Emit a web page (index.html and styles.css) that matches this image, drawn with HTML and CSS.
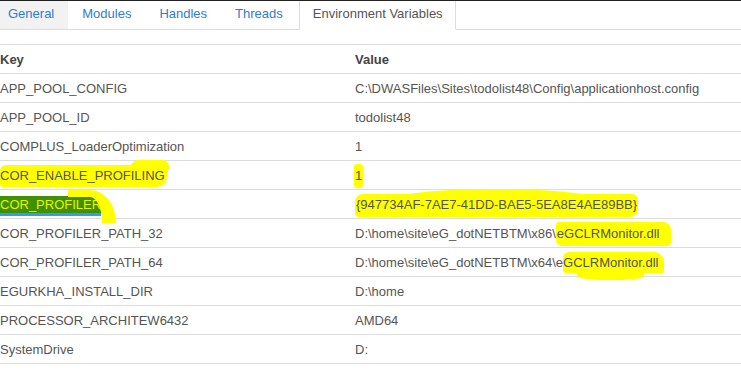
FILE: index.html
```html
<!DOCTYPE html>
<html lang="en">
<head>
    <meta charset="UTF-8">
    <meta name="viewport" content="width=device-width, initial-scale=1.0">
    <title>Process Explorer - Environment Variables</title>
    <link rel="stylesheet" href="styles.css">
</head>
<body>
    <div class="topbar"></div>
    <ul class="tabs">
        <li class="tab first"><a href="#">General</a></li>
        <li class="tab"><a href="#">Modules</a></li>
        <li class="tab"><a href="#">Handles</a></li>
        <li class="tab"><a href="#">Threads</a></li>
        <li class="tab active"><a href="#">Environment Variables</a></li>
    </ul>
    <table class="env">
        <thead>
            <tr><th class="key">Key</th><th>Value</th></tr>
        </thead>
        <tbody>
            <tr><td class="key">APP_POOL_CONFIG</td><td>C:\DWASFiles\Sites\todolist48\Config\applicationhost.config</td></tr>
            <tr><td class="key">APP_POOL_ID</td><td>todolist48</td></tr>
            <tr><td class="key">COMPLUS_LoaderOptimization</td><td>1</td></tr>
            <tr><td class="key"><span class="hl hl-wide">COR_ENABLE_PROFILING</span></td><td><span class="hl hl-one">1</span></td></tr>
            <tr><td class="key"><span class="sel">COR_PROFILER</span></td><td><span class="hl hl-guid">{947734AF-7AE7-41DD-BAE5-5EA8E4AE89BB}</span></td></tr>
            <tr><td class="key">COR_PROFILER_PATH_32</td><td>D:\home\site\eG_dotNETBTM\x86\<span class="hl hl-dll">eGCLRMonitor.dll</span></td></tr>
            <tr><td class="key">COR_PROFILER_PATH_64</td><td>D:\home\site\eG_dotNETBTM\x64\e<span class="hl hl-dll2">GCLRMonitor.dll</span></td></tr>
            <tr><td class="key">EGURKHA_INSTALL_DIR</td><td>D:\home</td></tr>
            <tr><td class="key">PROCESSOR_ARCHITEW6432</td><td>AMD64</td></tr>
            <tr><td class="key">SystemDrive</td><td>D:</td></tr>
        </tbody>
    </table>
</body>
</html>
```

FILE: styles.css
```css
body {
    margin: 0;
    font-family: "Liberation Sans", Arial, sans-serif;
    color: #555;
    background-color: #fff;
}
.topbar {
    height: 1px;
    background-color: #222;
}
.tabs {
    display: flex;
    margin: 0;
    padding: 0;
    list-style: none;
    height: 28px;
    border-bottom: 1px solid #ddd;
}
.tab {
    padding: 0 14px 3px 14px;
    line-height: 25px;
    font-size: 13px;
}
.tab a {
    color: #2f7cd3;
    text-decoration: none;
}
.tab.first {
    padding-left: 8px;
    background-color: #f2f2f2;
}
.tab.active {
    padding: 0 12px 0 13px;
    margin-left: 2px;
    border: 1px solid #ddd;
    border-top: none;
    border-bottom-color: #fff;
    background-color: #fff;
    height: 28px;
}
.tab.active a {
    color: #555;
}
.env {
    width: 100%;
    margin-top: 14px;
    border-collapse: collapse;
    font-size: 13px;
}
.env th, .env td {
    height: 28px;
    padding: 0;
    text-align: left;
    border-top: 1px solid #ddd;
    border-bottom: 1px solid #ddd;
    white-space: nowrap;
}
.env th {
    font-weight: bold;
    color: #444;
}
.env .key {
    width: 355px;
}
.hl {
    position: relative;
    background-color: #ffff00;
    padding: 3px 0;
}
.hl-wide {
    border-radius: 6px 2px 10px 3px;
    padding: 3px 2px 4px 0;
}
.hl-wide::after {
    content: '';
    position: absolute;
    right: -2px;
    top: -5px;
    width: 40px;
    height: 10px;
    background-color: #ffff00;
    border-radius: 10px 6px 0 0;
}
.hl-one {
    padding: 4px 1px 5px 1px;
    margin-left: -1px;
    border-radius: 3px;
}
.hl-guid {
    padding: 3px 1px 5px 1px;
    border-radius: 8px 6px 8px 4px;
}
.hl-guid::after {
    content: '';
    position: absolute;
    left: 40px;
    top: -5px;
    width: 200px;
    height: 10px;
    background-color: #ffff00;
    border-radius: 50% 50% 0 0 / 100% 100% 0 0;
}
.hl-dll {
    padding: 4px 12px 5px 1px;
    border-radius: 3px 8px 4px 6px;
}
.hl-dll2 {
    padding: 3px 6px 3px 0;
    border-radius: 6px 10px 2px 3px;
}
.hl-dll2::after {
    content: '';
    position: absolute;
    left: 14px;
    right: 20px;
    bottom: -7px;
    height: 10px;
    background-color: #ffff00;
    border-radius: 0 0 40% 40%;
}
.sel {
    position: relative;
    display: inline-block;
    line-height: 17px;
    background-color: #3f9100;
    color: #e6f200;
    box-shadow: 0 3px 0 #3399ff;
}
.sel::after {
    content: '';
    position: absolute;
    left: 68px;
    top: -6px;
    width: 34px;
    height: 26px;
    border-top: 7px solid #ffff00;
    border-right: 14px solid #ffff00;
    border-top-right-radius: 26px 32px;
}
```
